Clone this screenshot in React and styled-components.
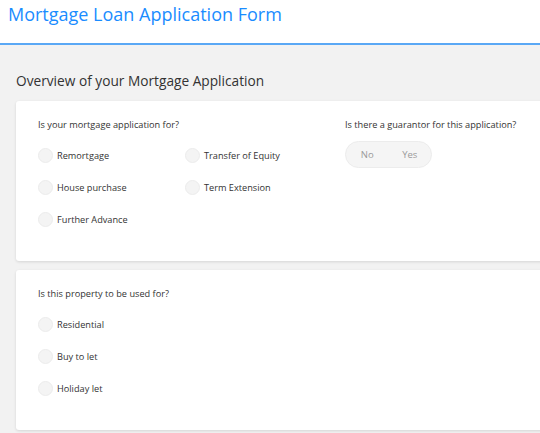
import React from "react";
import styled, { createGlobalStyle } from "styled-components";

const Global = createGlobalStyle`
  html, body { margin: 0; padding: 0; }
  body {
    background: #f2f2f2;
    font-family: "Open Sans", "Noto Sans", sans-serif;
    overflow: hidden;
    width: 540px;
    height: 433px;
  }
`;

const Page = styled.div`
  width: 540px;
  overflow: hidden;
`;

const Header = styled.header`
  background: #ffffff;
  height: 43px;
  border-bottom: 2px solid #5aa8f5;
  padding-left: 8px;
  display: flex;
  align-items: flex-start;
`;

const Title = styled.h1`
  margin: 0;
  padding-top: 1px;
  font-weight: 400;
  font-size: 18px;
  line-height: 26px;
  color: #1a8cff;
`;

const Main = styled.main`
  padding: 26px 0 0 16px;
  width: 580px;
`;

const Heading = styled.h2`
  margin: 0 0 10px;
  font-weight: 400;
  font-size: 13.7px;
  line-height: 20px;
  color: #333;
`;

const Card = styled.section`
  background: #fff;
  border-radius: 3px;
  box-shadow: 0 1px 3px rgba(0, 0, 0, 0.12);
  height: 160px;
  box-sizing: border-box;
  padding: 17px 22px 0;
  margin-bottom: 9px;
  display: flex;
`;

const Group = styled.div`
  display: flex;
  flex-direction: column;
  width: ${(p) => p.$width || "auto"};
`;

const Question = styled.div`
  font-size: 9.2px;
  line-height: 14px;
  color: #333;
  margin-bottom: 14px;
`;

const Options = styled.div`
  display: grid;
  grid-template-columns: 147px auto;
  row-gap: 14px;
`;

const Option = styled.label`
  display: flex;
  align-items: center;
  gap: 4px;
  height: 18px;
  font-size: 9.2px;
  color: #333;
`;

const Radio = styled.span`
  width: 13px;
  height: 13px;
  border-radius: 50%;
  background: #f4f4f4;
  border: 1px solid #ececec;
  flex-shrink: 0;
`;

const Toggle = styled.div`
  display: flex;
  align-items: center;
  width: 87px;
  height: 27px;
  box-sizing: border-box;
  border-radius: 14px;
  background: #f5f5f5;
  border: 1px solid #ececec;
  margin-top: -5px;
`;

const ToggleOption = styled.span`
  flex: 1;
  text-align: center;
  font-size: 9.5px;
  color: #9a9a9a;
`;

const purposeOptions = [
  "Remortgage",
  "Transfer of Equity",
  "House purchase",
  "Term Extension",
  "Further Advance",
];

const useOptions = ["Residential", "Buy to let", "Holiday let"];

export default function App() {
  return (
    <Page>
      <Global />
      <Header>
        <Title>Mortgage Loan Application Form</Title>
      </Header>
      <Main>
        <Heading>Overview of your Mortgage Application</Heading>
        <Card>
          <Group $width="307px">
            <Question>Is your mortgage application for?</Question>
            <Options>
              {purposeOptions.map((o) => (
                <Option key={o}>
                  <Radio />
                  {o}
                </Option>
              ))}
            </Options>
          </Group>
          <Group>
            <Question>Is there a guarantor for this application?</Question>
            <Toggle>
              <ToggleOption>No</ToggleOption>
              <ToggleOption>Yes</ToggleOption>
            </Toggle>
          </Group>
        </Card>
        <Card>
          <Group>
            <Question>Is this property to be used for?</Question>
            <Options>
              {useOptions.map((o) => (
                <Option key={o} style={{ gridColumn: 1 }}>
                  <Radio />
                  {o}
                </Option>
              ))}
            </Options>
          </Group>
        </Card>
      </Main>
    </Page>
  );
}
